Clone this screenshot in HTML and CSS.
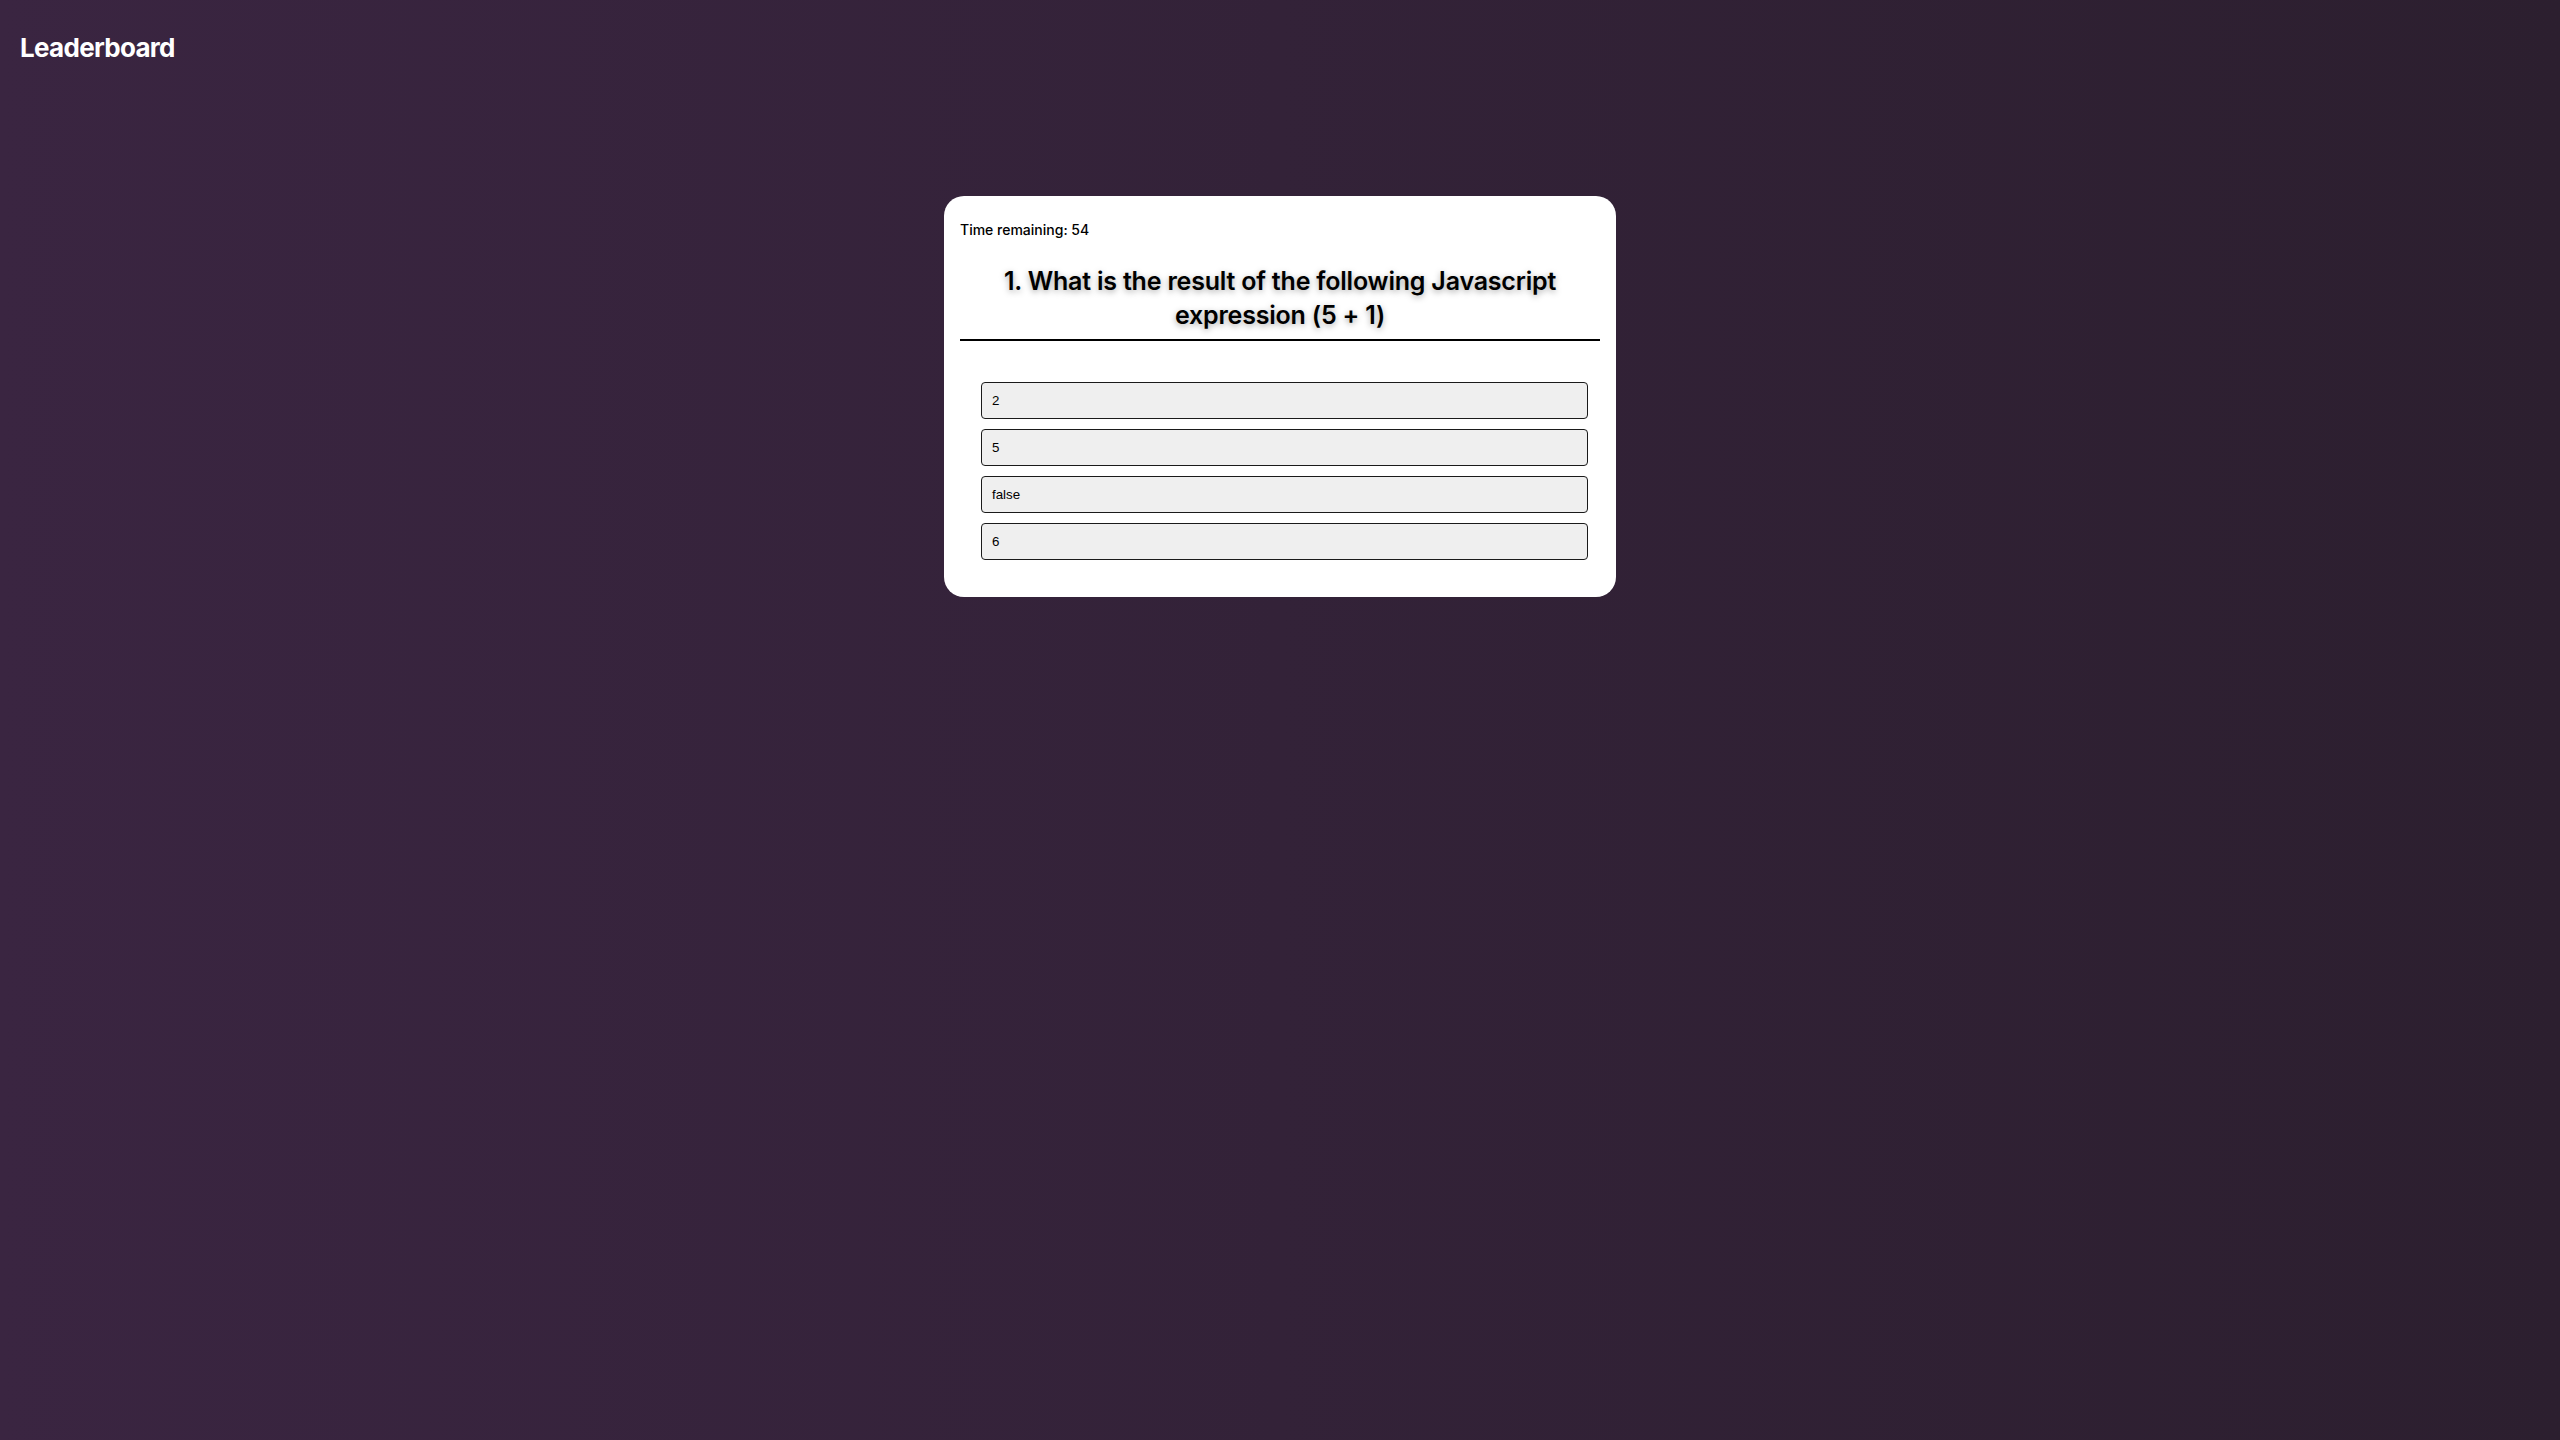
FILE: index.html
```html
<!DOCTYPE html>
<html lang="en">
<head>
<meta charset="utf-8">
<title>Quiz</title>
<link rel="stylesheet" href="styles.css">
</head>
<body>
<header class="topbar">
  <h1 class="brand">Leaderboard</h1>
</header>
<main class="stage">
  <section class="quiz-card">
    <p class="timer">Time remaining: 54</p>
    <h2 class="question">1. What is the result of the following Javascript expression (5 + 1)</h2>
    <div class="options">
      <button class="option">2</button>
      <button class="option">5</button>
      <button class="option">false</button>
      <button class="option">6</button>
    </div>
  </section>
</main>
</body>
</html>
```

FILE: styles.css
```css
* { box-sizing: border-box; }

html, body {
  margin: 0;
  min-height: 100%;
}

body {
  min-height: 1440px;
  background: linear-gradient(to right, #3a2541, #2c1f2f);
  font-family: "Inter", "Open Sans", sans-serif;
}

.topbar {
  padding: 31px 20px 0;
}

.brand {
  margin: 0;
  color: #ffffff;
  font-size: 26px;
  line-height: 34px;
  font-weight: 700;
  letter-spacing: -0.7px;
}

.stage {
  display: flex;
  justify-content: center;
  padding-top: 131px;
}

.quiz-card {
  width: 672px;
  background: #ffffff;
  border-radius: 20px;
  padding: 16px 16px 37px;
}

.timer {
  margin: 8px 0 0;
  font-size: 14px;
  line-height: 20px;
  font-weight: 500;
  color: #000;
}

.question {
  margin: 24px 0 0;
  padding-bottom: 7px;
  border-bottom: 2px solid #000;
  text-align: center;
  font-size: 25px;
  line-height: 34px;
  font-weight: 600;
  letter-spacing: -0.2px;
  color: #000;
  text-shadow: 0 2px 6px rgba(0, 0, 0, 0.35);
}

.options {
  display: flex;
  flex-direction: column;
  gap: 10px;
  margin-top: 41px;
  padding: 0 12px 0 21px;
}

.option {
  display: block;
  width: 100%;
  text-align: left;
  padding: 10px 10px;
  font-family: "Liberation Sans", Arial, sans-serif;
  font-size: 13.33px;
  line-height: 15px;
  color: #000;
  background: #efefef;
  border: 1px solid #1a1a1a;
  border-radius: 4px;
}
```
